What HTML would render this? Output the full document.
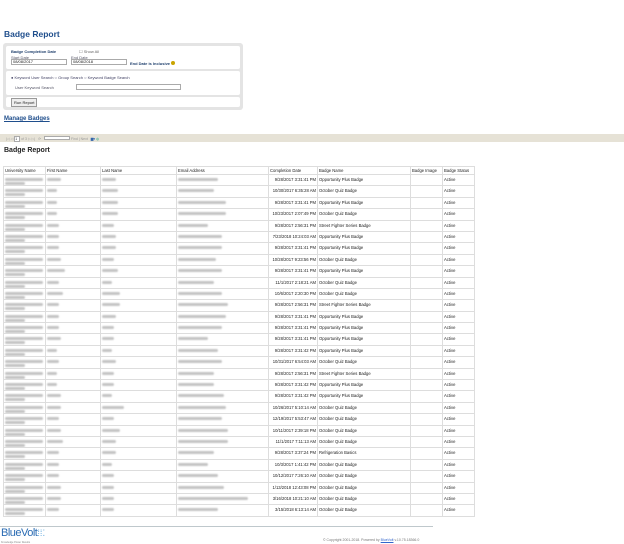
<!DOCTYPE html>
<html><head><meta charset="utf-8"><style>
*{margin:0;padding:0;box-sizing:border-box}
body{width:624px;height:543px;background:#fff;font-family:"Liberation Sans",Arial,sans-serif;position:relative;overflow:hidden;color:#222}
.a{position:absolute}
h1{position:absolute;left:4px;top:29px;font-size:8.5px;color:#1f4e8c;font-weight:bold}
.panel{left:3px;top:43px;width:240px;height:67px;background:#e4e4e4;border-radius:3px}
.box{position:absolute;left:3px;width:234px;background:#fff;border-radius:2px}
.in{position:absolute;height:6px;border:1px solid #aaa;background:#fff;font-size:4px;line-height:4px;padding-left:1px}
.s{font-size:4px;color:#334}
.tb{left:0;top:134px;width:624px;height:8px;background:#e6e2d6}
table{position:absolute;left:3px;top:166px;width:471px;border-collapse:collapse;font-size:4.2px;table-layout:fixed}
td{border:0.5px solid #ddd;height:11.4px;padding:0 1px;vertical-align:top;padding-top:2px;white-space:nowrap;overflow:hidden}
tr.h td{height:8px;padding-top:1px}
.b{display:block;height:3px;background:#c4c4c4;filter:blur(.8px);border-radius:2px;margin-top:1px}
.d{text-align:right}
</style></head><body>
<h1>Badge Report</h1>
<div class="a panel">
 <div class="box" style="top:3px;height:23px">
  <div class="a s" style="left:5px;top:3px;font-weight:bold;color:#1f3f6c">Badge Completion Date</div>
  <div class="a s" style="left:73px;top:3px;color:#666">☐ Show All</div>
  <div class="a s" style="left:5px;top:9px;color:#556">Start Date</div>
  <div class="a s" style="left:65px;top:9px;color:#556">End Date</div>
  <div class="in" style="left:5px;top:13px;width:56px">08/08/2017</div>
  <div class="in" style="left:65px;top:13px;width:56px">08/08/2018</div>
  <div class="a s" style="left:124px;top:15px;font-weight:bold;color:#1f3f6c">End Date is Inclusive <span style="display:inline-block;width:4px;height:4px;border-radius:50%;background:#c9a400"></span></div>
 </div>
 <div class="box" style="top:28px;height:24px">
  <div class="a s" style="left:5px;top:4px;color:#446">● Keyword User Search ○ Group Search ○ Keyword Badge Search</div>
  <div class="a s" style="left:9px;top:14px;color:#556">User Keyword Search</div>
  <div class="in" style="left:70px;top:13px;width:105px"></div>
 </div>
 <div class="box" style="top:54px;height:10px">
  <div class="a s" style="left:5px;top:1px;border:1px solid #999;background:#eee;padding:1px 2px;color:#222">Run Report</div>
 </div>
</div>
<div class="a" style="left:4px;top:116px;font-size:6px;font-weight:bold;color:#1f4e8c;text-decoration:underline">Manage Badges</div>
<div class="a tb"><div class="a s" style="left:6px;top:2px;color:#999;font-size:3.5px">|◁ ◁ <span style="background:#fff;border:1px solid #aaa;color:#333">1&nbsp;&nbsp;</span> of 3 ▷ ▷| &nbsp; ⟳ &nbsp;&nbsp;<span style="background:#fff;border:1px solid #aaa;display:inline-block;width:26px;height:4px"></span> Find | Next &nbsp; <span style="color:#36a">▆▾</span> <span style="color:#3a8">◍</span></div></div>
<div class="a" style="left:4px;top:147px;font-size:7px;font-weight:bold">Badge Report</div>
<table>
<colgroup><col style="width:42px"><col style="width:55px"><col style="width:76px"><col style="width:92px"><col style="width:49px"><col style="width:93px"><col style="width:32px"><col style="width:32px"></colgroup>
<tr class="h"><td>University Name</td><td>First Name</td><td>Last Name</td><td>Email Address</td><td>Completion Date</td><td>Badge Name</td><td>Badge Image</td><td>Badge Status</td></tr>
<tr><td><span class="b" style="width:38px"></span><span class="b" style="width:20px"></span></td><td><span class="b" style="width:14px"></span></td><td><span class="b" style="width:14px"></span></td><td><span class="b" style="width:40px"></span></td><td class="d">9/28/2017 3:31:41 PM</td><td>Opportunity Plus Badge</td><td></td><td>Active</td></tr>
<tr><td><span class="b" style="width:38px"></span><span class="b" style="width:20px"></span></td><td><span class="b" style="width:10px"></span></td><td><span class="b" style="width:16px"></span></td><td><span class="b" style="width:36px"></span></td><td class="d">10/30/2017 6:35:28 AM</td><td>October Quiz Badge</td><td></td><td>Active</td></tr>
<tr><td><span class="b" style="width:38px"></span><span class="b" style="width:20px"></span></td><td><span class="b" style="width:10px"></span></td><td><span class="b" style="width:16px"></span></td><td><span class="b" style="width:48px"></span></td><td class="d">9/28/2017 3:31:41 PM</td><td>Opportunity Plus Badge</td><td></td><td>Active</td></tr>
<tr><td><span class="b" style="width:38px"></span><span class="b" style="width:20px"></span></td><td><span class="b" style="width:10px"></span></td><td><span class="b" style="width:16px"></span></td><td><span class="b" style="width:48px"></span></td><td class="d">10/23/2017 2:07:49 PM</td><td>October Quiz Badge</td><td></td><td>Active</td></tr>
<tr><td><span class="b" style="width:38px"></span><span class="b" style="width:20px"></span></td><td><span class="b" style="width:12px"></span></td><td><span class="b" style="width:12px"></span></td><td><span class="b" style="width:30px"></span></td><td class="d">9/28/2017 2:56:31 PM</td><td>Street Fighter Series Badge</td><td></td><td>Active</td></tr>
<tr><td><span class="b" style="width:38px"></span><span class="b" style="width:20px"></span></td><td><span class="b" style="width:12px"></span></td><td><span class="b" style="width:14px"></span></td><td><span class="b" style="width:44px"></span></td><td class="d">7/23/2018 10:24:03 AM</td><td>Opportunity Plus Badge</td><td></td><td>Active</td></tr>
<tr><td><span class="b" style="width:38px"></span><span class="b" style="width:20px"></span></td><td><span class="b" style="width:12px"></span></td><td><span class="b" style="width:14px"></span></td><td><span class="b" style="width:44px"></span></td><td class="d">9/28/2017 3:31:41 PM</td><td>Opportunity Plus Badge</td><td></td><td>Active</td></tr>
<tr><td><span class="b" style="width:38px"></span><span class="b" style="width:20px"></span></td><td><span class="b" style="width:14px"></span></td><td><span class="b" style="width:12px"></span></td><td><span class="b" style="width:38px"></span></td><td class="d">10/28/2017 9:23:56 PM</td><td>October Quiz Badge</td><td></td><td>Active</td></tr>
<tr><td><span class="b" style="width:38px"></span><span class="b" style="width:20px"></span></td><td><span class="b" style="width:18px"></span></td><td><span class="b" style="width:16px"></span></td><td><span class="b" style="width:44px"></span></td><td class="d">9/28/2017 3:31:41 PM</td><td>Opportunity Plus Badge</td><td></td><td>Active</td></tr>
<tr><td><span class="b" style="width:38px"></span><span class="b" style="width:20px"></span></td><td><span class="b" style="width:12px"></span></td><td><span class="b" style="width:10px"></span></td><td><span class="b" style="width:36px"></span></td><td class="d">11/1/2017 2:18:21 AM</td><td>October Quiz Badge</td><td></td><td>Active</td></tr>
<tr><td><span class="b" style="width:38px"></span><span class="b" style="width:20px"></span></td><td><span class="b" style="width:16px"></span></td><td><span class="b" style="width:18px"></span></td><td><span class="b" style="width:44px"></span></td><td class="d">10/6/2017 2:20:30 PM</td><td>October Quiz Badge</td><td></td><td>Active</td></tr>
<tr><td><span class="b" style="width:38px"></span><span class="b" style="width:20px"></span></td><td><span class="b" style="width:12px"></span></td><td><span class="b" style="width:18px"></span></td><td><span class="b" style="width:50px"></span></td><td class="d">9/28/2017 2:56:31 PM</td><td>Street Fighter Series Badge</td><td></td><td>Active</td></tr>
<tr><td><span class="b" style="width:38px"></span><span class="b" style="width:20px"></span></td><td><span class="b" style="width:12px"></span></td><td><span class="b" style="width:14px"></span></td><td><span class="b" style="width:48px"></span></td><td class="d">9/28/2017 3:31:41 PM</td><td>Opportunity Plus Badge</td><td></td><td>Active</td></tr>
<tr><td><span class="b" style="width:38px"></span><span class="b" style="width:20px"></span></td><td><span class="b" style="width:12px"></span></td><td><span class="b" style="width:12px"></span></td><td><span class="b" style="width:44px"></span></td><td class="d">9/28/2017 3:31:41 PM</td><td>Opportunity Plus Badge</td><td></td><td>Active</td></tr>
<tr><td><span class="b" style="width:38px"></span><span class="b" style="width:20px"></span></td><td><span class="b" style="width:14px"></span></td><td><span class="b" style="width:12px"></span></td><td><span class="b" style="width:30px"></span></td><td class="d">9/28/2017 3:31:41 PM</td><td>Opportunity Plus Badge</td><td></td><td>Active</td></tr>
<tr><td><span class="b" style="width:38px"></span><span class="b" style="width:20px"></span></td><td><span class="b" style="width:10px"></span></td><td><span class="b" style="width:10px"></span></td><td><span class="b" style="width:40px"></span></td><td class="d">9/28/2017 3:31:42 PM</td><td>Opportunity Plus Badge</td><td></td><td>Active</td></tr>
<tr><td><span class="b" style="width:38px"></span><span class="b" style="width:20px"></span></td><td><span class="b" style="width:12px"></span></td><td><span class="b" style="width:14px"></span></td><td><span class="b" style="width:44px"></span></td><td class="d">10/31/2017 6:54:03 AM</td><td>October Quiz Badge</td><td></td><td>Active</td></tr>
<tr><td><span class="b" style="width:38px"></span><span class="b" style="width:20px"></span></td><td><span class="b" style="width:10px"></span></td><td><span class="b" style="width:12px"></span></td><td><span class="b" style="width:36px"></span></td><td class="d">9/28/2017 2:56:31 PM</td><td>Street Fighter Series Badge</td><td></td><td>Active</td></tr>
<tr><td><span class="b" style="width:38px"></span><span class="b" style="width:20px"></span></td><td><span class="b" style="width:10px"></span></td><td><span class="b" style="width:12px"></span></td><td><span class="b" style="width:36px"></span></td><td class="d">9/28/2017 3:31:42 PM</td><td>Opportunity Plus Badge</td><td></td><td>Active</td></tr>
<tr><td><span class="b" style="width:38px"></span><span class="b" style="width:20px"></span></td><td><span class="b" style="width:14px"></span></td><td><span class="b" style="width:10px"></span></td><td><span class="b" style="width:46px"></span></td><td class="d">9/28/2017 3:31:42 PM</td><td>Opportunity Plus Badge</td><td></td><td>Active</td></tr>
<tr><td><span class="b" style="width:38px"></span><span class="b" style="width:20px"></span></td><td><span class="b" style="width:14px"></span></td><td><span class="b" style="width:22px"></span></td><td><span class="b" style="width:48px"></span></td><td class="d">10/26/2017 5:10:14 AM</td><td>October Quiz Badge</td><td></td><td>Active</td></tr>
<tr><td><span class="b" style="width:38px"></span><span class="b" style="width:20px"></span></td><td><span class="b" style="width:12px"></span></td><td><span class="b" style="width:12px"></span></td><td><span class="b" style="width:44px"></span></td><td class="d">12/19/2017 5:53:47 AM</td><td>October Quiz Badge</td><td></td><td>Active</td></tr>
<tr><td><span class="b" style="width:38px"></span><span class="b" style="width:20px"></span></td><td><span class="b" style="width:14px"></span></td><td><span class="b" style="width:18px"></span></td><td><span class="b" style="width:50px"></span></td><td class="d">10/11/2017 2:39:18 PM</td><td>October Quiz Badge</td><td></td><td>Active</td></tr>
<tr><td><span class="b" style="width:38px"></span><span class="b" style="width:20px"></span></td><td><span class="b" style="width:16px"></span></td><td><span class="b" style="width:14px"></span></td><td><span class="b" style="width:50px"></span></td><td class="d">11/1/2017 7:11:13 AM</td><td>October Quiz Badge</td><td></td><td>Active</td></tr>
<tr><td><span class="b" style="width:38px"></span><span class="b" style="width:20px"></span></td><td><span class="b" style="width:12px"></span></td><td><span class="b" style="width:14px"></span></td><td><span class="b" style="width:36px"></span></td><td class="d">9/28/2017 3:37:24 PM</td><td>Refrigeration Basics</td><td></td><td>Active</td></tr>
<tr><td><span class="b" style="width:38px"></span><span class="b" style="width:20px"></span></td><td><span class="b" style="width:12px"></span></td><td><span class="b" style="width:10px"></span></td><td><span class="b" style="width:30px"></span></td><td class="d">10/3/2017 1:41:42 PM</td><td>October Quiz Badge</td><td></td><td>Active</td></tr>
<tr><td><span class="b" style="width:38px"></span><span class="b" style="width:20px"></span></td><td><span class="b" style="width:12px"></span></td><td><span class="b" style="width:12px"></span></td><td><span class="b" style="width:40px"></span></td><td class="d">10/12/2017 7:26:10 AM</td><td>October Quiz Badge</td><td></td><td>Active</td></tr>
<tr><td><span class="b" style="width:38px"></span><span class="b" style="width:20px"></span></td><td><span class="b" style="width:14px"></span></td><td><span class="b" style="width:12px"></span></td><td><span class="b" style="width:46px"></span></td><td class="d">1/13/2018 12:43:08 PM</td><td>October Quiz Badge</td><td></td><td>Active</td></tr>
<tr><td><span class="b" style="width:38px"></span><span class="b" style="width:20px"></span></td><td><span class="b" style="width:14px"></span></td><td><span class="b" style="width:12px"></span></td><td><span class="b" style="width:70px"></span></td><td class="d">3/16/2018 10:21:10 AM</td><td>October Quiz Badge</td><td></td><td>Active</td></tr>
<tr><td><span class="b" style="width:38px"></span><span class="b" style="width:20px"></span></td><td><span class="b" style="width:12px"></span></td><td><span class="b" style="width:12px"></span></td><td><span class="b" style="width:40px"></span></td><td class="d">3/15/2018 6:13:14 AM</td><td>October Quiz Badge</td><td></td><td>Active</td></tr>
</table>
<div class="a" style="left:0;top:526px;width:433px;height:1px;background:#bfc8cc"></div>
<div class="a" style="left:1px;top:527px;font-size:11px;color:#2a6bb3;letter-spacing:-0.5px">BlueVolt<span style="color:#6fb0e0;font-size:9px;letter-spacing:0">⁞⁞⁚</span></div>
<div class="a" style="left:1px;top:541px;font-size:2.5px;color:#888">Knowledge Power Results</div>
<div class="a" style="left:323px;top:538px;font-size:3.5px;color:#777">© Copyright 2001-2018. Powered by <span style="color:#36c;text-decoration:underline">BlueVolt</span> v.10.75.18366.0</div>
</body></html>
